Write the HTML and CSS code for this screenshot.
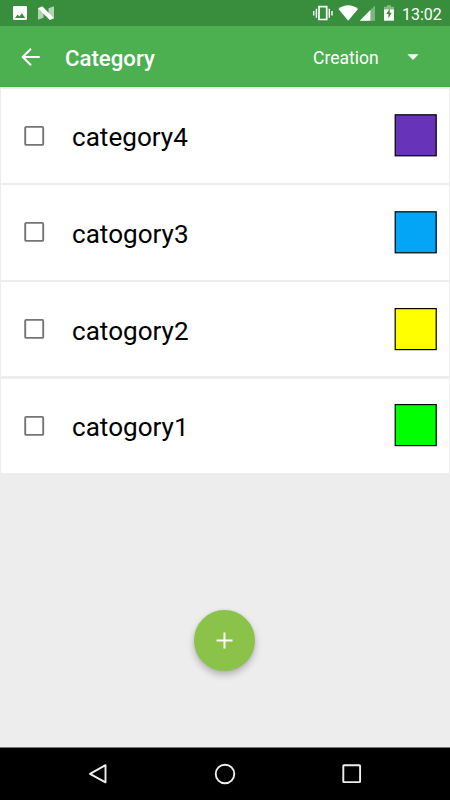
FILE: index.html
```html
<!DOCTYPE html>
<html lang="en">
<head>
<meta charset="utf-8">
<title>Category</title>
<link rel="stylesheet" href="styles.css">
</head>
<body>
<div class="screen">
  <div class="status">
    <svg class="notifications" width="60" height="26" viewBox="0 0 60 26">
      <path fill="#fff" fill-rule="evenodd" d="M14.3 6h11.4a1.3 1.3 0 0 1 1.3 1.3v11.4a1.3 1.3 0 0 1-1.3 1.3H14.3a1.3 1.3 0 0 1-1.3-1.3V7.300a1.300 1.300 0 0 1 1.300-1.300zM15 18h10.200l-3.300-4.700-2.500 3.300-1.800-2.100z"/>
      <path fill="#fff" opacity=".62" d="M38 7.500l5.500 5.500v4.700L38 19.800zM54 6.300v12.400l-5.500-5V8.200z"/>
      <path fill="#fff" d="M38 8.200l4.300-1.900L54 18.300l-4.200 1.700z"/>
    </svg>
    <svg class="indicators" width="90" height="26" viewBox="310 0 90 26">
      <path fill="none" stroke="#fff" stroke-width="1.700" d="M319 6.700h7.700v12.800H319z"/>
      <path fill="none" stroke="#fff" stroke-width="1.400" d="M316.400 8.700v9M313.700 10.900v4.600M329.300 8.700v9M332 10.900v4.600"/>
      <path fill="#fff" d="M338.500 8.900C344.200 4 352.300 4 358 8.900L348.200 20.700z"/>
      <path fill="#fff" opacity=".35" d="M375 5.500V20.700H359.800z"/>
      <path fill="#fff" d="M370.400 10.100V20.700H359.800z"/>
      <path fill="#fff" opacity=".4" d="M387 5.300h4v1.400h3V10h-10V6.700h3z"/>
      <path fill="#fff" d="M384 9.500h10v11.200h-10z"/>
      <path fill="#388e3c" d="M389.700 8.400v4.300h2l-3.300 5.700v-4.300h-2.100z"/>
    </svg>
    <span class="clock">13:02</span>
  </div>
  <div class="toolbar">
    <svg class="back" width="20" height="20" viewBox="0 0 20 20"><path d="M18.700 10H2M10 1.700L1.700 10l8.300 8.300"/></svg>
    <h1 class="title">Category</h1>
    <span class="sort">Creation</span>
    <svg class="caret" width="12" height="6" viewBox="0 0 12 6"><path d="M.4.300h11.200L6 5.900z"/></svg>
  </div>
  <div class="list">
    <div class="row">
      <svg class="check" width="22" height="22" viewBox="0 0 22 22"><rect x="2.200" y="1.900" width="18" height="18" rx="1"/></svg>
      <span class="name">category4</span>
      <svg class="swatch purple" width="43" height="43" viewBox="0 0 43 43"><rect x="1.200" y=".8" width="41" height="41"/></svg>
    </div>
    <div class="row">
      <svg class="check" width="22" height="22" viewBox="0 0 22 22"><rect x="2.200" y="1.900" width="18" height="18" rx="1"/></svg>
      <span class="name">catogory3</span>
      <svg class="swatch blue" width="43" height="43" viewBox="0 0 43 43"><rect x="1.200" y=".8" width="41" height="41"/></svg>
    </div>
    <div class="row">
      <svg class="check" width="22" height="22" viewBox="0 0 22 22"><rect x="2.200" y="1.900" width="18" height="18" rx="1"/></svg>
      <span class="name">catogory2</span>
      <svg class="swatch yellow" width="43" height="43" viewBox="0 0 43 43"><rect x="1.200" y=".6" width="41" height="41"/></svg>
    </div>
    <div class="row">
      <svg class="check" width="22" height="22" viewBox="0 0 22 22"><rect x="2.200" y="1.900" width="18" height="18" rx="1"/></svg>
      <span class="name">catogory1</span>
      <svg class="swatch green" width="43" height="43" viewBox="0 0 43 43"><rect x="1.200" y=".6" width="41" height="41"/></svg>
    </div>
  </div>
  <div class="fab">
    <svg width="17" height="17" viewBox="0 0 17 17"><path d="M8.500.500v16M.5 8.500h16"/></svg>
  </div>
  <div class="nav">
    <svg width="24" height="24" viewBox="0 0 24 24"><path d="M19.500 3.200v17.200L4 11.800z"/></svg>
    <svg width="24" height="24" viewBox="0 0 24 24"><circle cx="12" cy="12" r="9.300"/></svg>
    <svg width="24" height="24" viewBox="0 0 24 24"><rect x="3.300" y="3.300" width="16.800" height="16.800" rx=".7"/></svg>
  </div>
</div>
</body>
</html>
```
FILE: styles.css
```css
* { box-sizing: border-box; }
body { margin: 0; font-family: Roboto, "Liberation Sans", sans-serif; }
svg { display: block; flex: none; }
.screen {
  width: 450px;
  height: 800px;
  display: flex;
  flex-direction: column;
  background: #ededed;
  overflow: hidden;
}
.status {
  height: 26px;
  flex: none;
  display: flex;
  align-items: center;
  background: #388e3c;
  color: #fff;
}
.indicators { margin-left: 250px; }
.clock { margin-left: 2px; font-size: 16px; line-height: 26px; padding-top: 3px; }
.toolbar {
  height: 61px;
  flex: none;
  display: flex;
  align-items: center;
  padding-left: 21px;
  background: #4caf50;
  border-bottom: 1px solid #40ae45;
  color: #fff;
}
.back { margin-top: 1px; }
.back path { fill: none; stroke: #fff; stroke-width: 2; }
.title { margin: 4px 0 0 24px; width: 248px; font-size: 22.200px; font-weight: 500; line-height: 30px; }
.sort { width: 94px; margin-top: 3px; font-size: 17.500px; line-height: 24px; }
.caret { margin-top: 2px; }
.caret path { fill: #fff; }
.list {
  flex: none;
  display: flex;
  flex-direction: column;
  gap: 2.300px;
  padding: 1.600px 1px 0;
}
.row {
  height: 94.400px;
  display: flex;
  align-items: center;
  padding: 0 12px 0 22px;
  background: #fff;
}
.check rect { fill: none; stroke: #757575; stroke-width: 1.900; }
.name { flex: 1; margin-left: 27px; padding-top: 3px; font-size: 26.100px; line-height: 34px; color: #000; }
.swatch rect { stroke: #000; stroke-width: 1.200; }
.purple rect { fill: #6633b9; }
.blue rect { fill: #03a5f7; }
.yellow rect { fill: #ff0; }
.green rect { fill: #0f0; }
.fab {
  width: 61px;
  height: 61px;
  margin: auto auto 76px 194.300px;
  display: flex;
  align-items: center;
  justify-content: center;
  border-radius: 50%;
  background: #8bc34a;
  box-shadow: 0 4px 7px rgba(0, 0, 0, .24), 0 0 3px rgba(0, 0, 0, .08);
}
.fab path { fill: none; stroke: #fff; stroke-width: 2; }
.nav {
  height: 53px;
  flex: none;
  display: flex;
  align-items: center;
  justify-content: space-between;
  padding: 0 86px;
  background: #000;
  border-top: 1px solid #777;
}
.nav path, .nav circle, .nav rect { fill: none; stroke: #eee; stroke-width: 1.900; stroke-linejoin: round; }
```
